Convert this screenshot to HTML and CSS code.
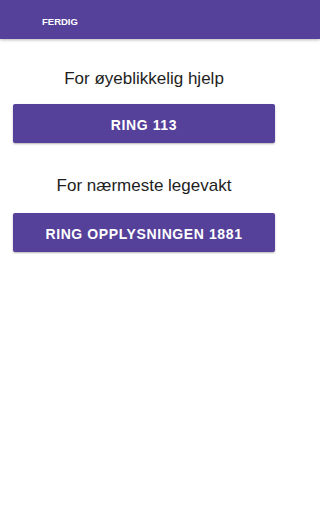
FILE: index.html
```html
<!DOCTYPE html>
<html lang="no">
<head>
<meta charset="utf-8">
<meta name="viewport" content="width=device-width, initial-scale=1">
<title>Hjelp</title>
<link rel="stylesheet" href="styles.css">
</head>
<body>
<header class="topbar">
  <span class="done">FERDIG</span>
</header>
<main class="content">
  <p class="label label-first">For øyeblikkelig hjelp</p>
  <button class="call-btn">RING 113</button>
  <p class="label label-second">For nærmeste legevakt</p>
  <button class="call-btn">RING OPPLYSNINGEN 1881</button>
</main>
</body>
</html>
```

FILE: styles.css
```css
* {
  box-sizing: border-box;
}

html, body {
  margin: 0;
  padding: 0;
  background: #ffffff;
  height: 512px;
  overflow: hidden;
  font-family: "Liberation Sans", Arial, sans-serif;
}

.topbar {
  position: relative;
  z-index: 1;
  height: 39px;
  background: #55409a;
  padding: 0 42px;
  line-height: 39px;
  box-shadow: 0 1px 3px rgba(0, 0, 0, 0.28);
}

.done {
  color: #ffffff;
  font-weight: bold;
  font-size: 9.5px;
}

.content {
  display: flex;
  flex-direction: column;
  align-items: stretch;
  width: 288px;
  padding: 30px 13px 0;
}

.label {
  margin: 0;
  text-align: center;
  font-size: 17px;
  line-height: 20px;
  color: #1e1e1e;
}

.label-first {
  margin-bottom: 15px;
}

.label-second {
  margin-top: 33px;
  margin-bottom: 17px;
}

.call-btn {
  display: block;
  width: 100%;
  height: 39px;
  margin: 0;
  padding: 3px 0 0;
  border: none;
  border-radius: 2px;
  background: #55409a;
  color: #ffffff;
  font-family: "Liberation Sans", Arial, sans-serif;
  font-weight: bold;
  font-size: 14px;
  letter-spacing: 0.6px;
  line-height: 36px;
  text-align: center;
  box-shadow: 0 1px 2px rgba(0, 0, 0, 0.3);
}
```
